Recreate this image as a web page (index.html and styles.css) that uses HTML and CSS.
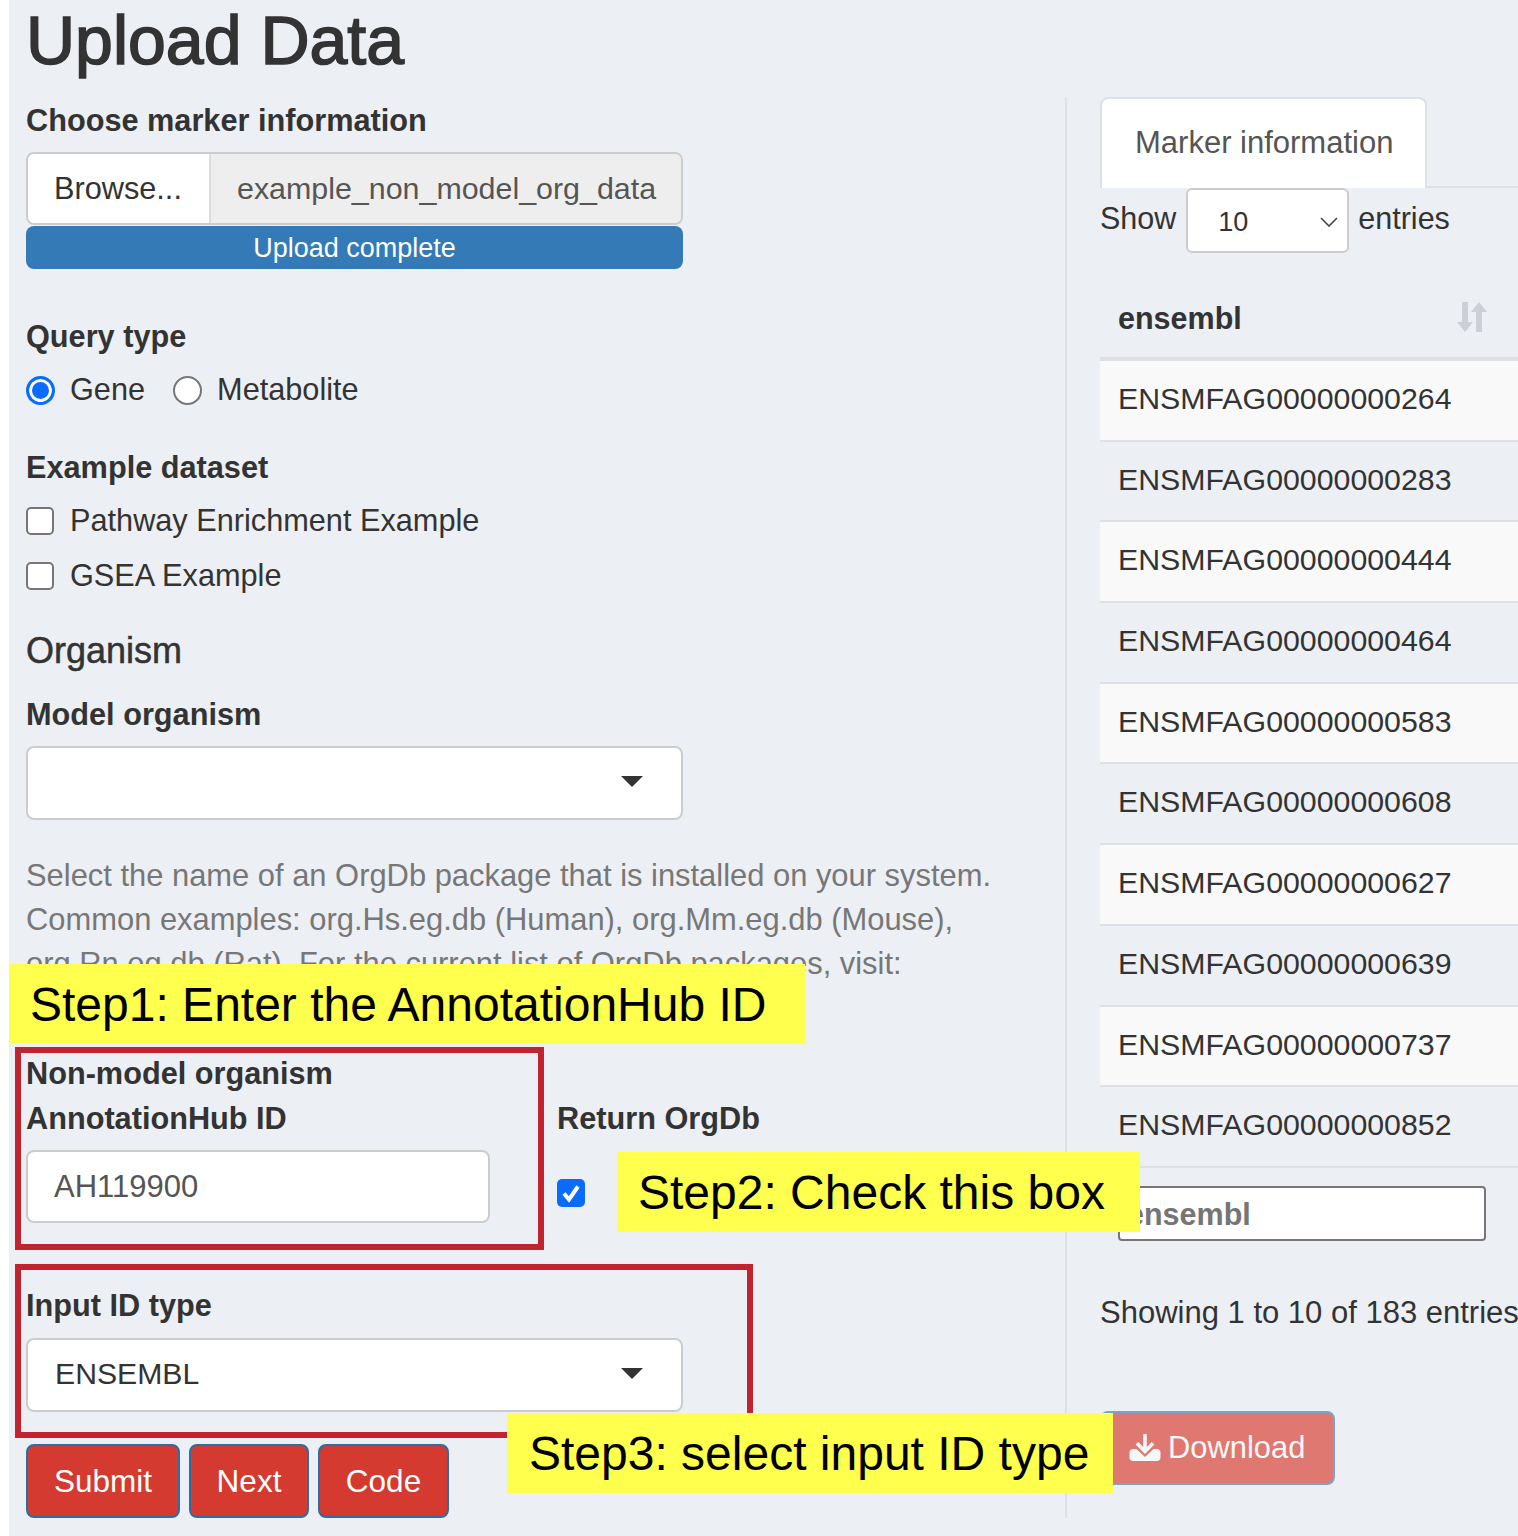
FILE: index.html
```html
<!DOCTYPE html>
<html lang="en">
<head>
    <meta charset="UTF-8">
    <title>Upload Data</title>
    <link rel="stylesheet" href="styles.css">
</head>
<body>

<div class="page">
    <h1>Upload Data</h1>

    <div class="columns">
        <div class="left">
            <div class="label">Choose marker information</div>
            <div class="file-input">
                <div class="browse">Browse...</div>
                <div class="file-name">example_non_model_org_data</div>
            </div>
            <div class="progress">Upload complete</div>

            <div class="label query-label">Query type</div>
            <div class="radios">
                <span class="radio checked"></span><span class="radio-text">Gene</span>
                <span class="radio"></span><span class="radio-text">Metabolite</span>
            </div>

            <div class="label example-label">Example dataset</div>
            <div class="check-row first"><span class="check"></span>Pathway Enrichment Example</div>
            <div class="check-row"><span class="check"></span>GSEA Example</div>

            <h4>Organism</h4>
            <div class="label model-label">Model organism</div>
            <div class="select select-model">
                <span class="caret"></span>
            </div>

            <p class="help">Select the name of an OrgDb package that is installed on your system. Common examples: org.Hs.eg.db (Human), org.Mm.eg.db (Mouse), org.Rn.eg.db (Rat). For the current list of OrgDb packages, visit:</p>

            <div class="non-model">
                <div class="hub">
                    <div class="label">Non-model organism</div>
                    <div class="label hub-label">AnnotationHub ID</div>
                    <input class="text-input" type="text" value="AH119900">
                </div>
                <div class="orgdb">
                    <div class="label">Return OrgDb</div>
                    <span class="check blue">
                        <svg viewBox="0 0 28 28" width="28" height="28"><path d="M7 14.5l5 6 9-13" fill="none" stroke="#fff" stroke-width="4"/></svg>
                    </span>
                </div>
            </div>

            <div class="label id-label">Input ID type</div>
            <div class="select select-id">
                ENSEMBL
                <span class="caret"></span>
            </div>

            <div class="buttons">
                <button class="btn submit">Submit</button>
                <button class="btn next">Next</button>
                <button class="btn code">Code</button>
            </div>
        </div>

        <div class="right">
            <div class="tabs">
                <div class="tab">Marker information</div>
            </div>
            <div class="length">
                Show
                <div class="length-select">
                    10
                    <svg viewBox="0 0 18 10" width="18" height="10"><path d="M1 1l8 8 8-8" fill="none" stroke="#444" stroke-width="1.6"/></svg>
                </div>
                entries
            </div>

            <div class="th">
                ensembl
                <svg viewBox="0 0 32 32" width="32" height="32"><path d="M6 1h6v20h5l-8 10-8-10h5zM23 1l8 10h-5v20h-6V11h-5z" fill="#ccd0d6"/></svg>
            </div>
            <div class="td odd">ENSMFAG00000000264</div>
            <div class="td">ENSMFAG00000000283</div>
            <div class="td odd">ENSMFAG00000000444</div>
            <div class="td">ENSMFAG00000000464</div>
            <div class="td odd">ENSMFAG00000000583</div>
            <div class="td">ENSMFAG00000000608</div>
            <div class="td odd">ENSMFAG00000000627</div>
            <div class="td">ENSMFAG00000000639</div>
            <div class="td odd">ENSMFAG00000000737</div>
            <div class="td">ENSMFAG00000000852</div>

            <div class="filter">ensembl</div>
            <div class="info">Showing 1 to 10 of 183 entries</div>

            <button class="download">
                <svg viewBox="0 0 32 28" width="32" height="28"><path d="M14.2 0h3.6v13l5-5 2.6 2.6L16 20l-9.4-9.4L9.2 8l5 5z" fill="#f6f7f9"/><path d="M4 15h3.500l8.500 8 8.500-8H28c2 0 3.500 1.500 3.500 3.500v5c0 2-1.500 3.500-3.500 3.500H4c-2 0-3.500-1.500-3.500-3.500v-5C.5 16.500 2 15 4 15z" fill="#f6f7f9"/></svg>
                Download
            </button>
        </div>
    </div>

    <!-- annotations drawn on top of the screenshot -->
    <div class="red-box box-hub"></div>
    <div class="red-box box-id"></div>
    <div class="step step1">Step1: Enter the AnnotationHub ID</div>
    <div class="step step2">Step2: Check this box</div>
    <div class="step step3">Step3: select input ID type</div>
</div>

</body>
</html>
```

FILE: styles.css
```css
* {
    box-sizing: border-box;
}
html, body {
    margin: 0;
    height: 1536px;
    overflow: hidden;
    background-color: #fff;
}
body {
    font-family: "Liberation Sans", Arial, sans-serif;
    font-size: 30.7px;
    color: #333;
}
.page {
    position: relative;
    margin-left: 9px;
    height: 1536px;
    width: 1509px;
    background-color: #eceff4;
    overflow: hidden;
}
h1 {
    margin: 0 0 17px 17px;
    height: 80px;
    font-size: 68px;
    line-height: 80px;
    font-weight: normal;
    -webkit-text-stroke: 1.6px #333;
}
.columns {
    display: flex;
    height: 1421px;
}
.left {
    width: 1056px;
    padding-left: 17px;
    flex-shrink: 0;
}
.right {
    width: 453px;
    border-left: 2px solid #dde0e4;
    padding-left: 33px;
}

/* form bits */
.label {
    font-weight: bold;
    line-height: 48px;
    height: 46px;
    white-space: nowrap;
}
.hub-label {
    margin-top: -1px;
}
.file-input {
    display: flex;
    width: 657px;
    height: 73px;
    margin-top: 9px;
    border: 2px solid #ccc;
    border-radius: 8px;
    overflow: hidden;
    line-height: 69px;
}
.browse {
    width: 183px;
    padding-left: 26px;
    background-color: #fff;
    border-right: 2px solid #ddd;
}
.file-name {
    flex: 1;
    padding-left: 26px;
    background-color: #eee;
    color: #555;
    font-size: 30.4px;
    white-space: nowrap;
}
.progress {
    width: 657px;
    height: 43px;
    margin-top: 1px;
    background-color: #337ab7;
    border-radius: 8px;
    color: #fff;
    font-size: 27px;
    line-height: 45px;
    text-align: center;
}
.query-label {
    margin-top: 44px;
}
.radios {
    display: flex;
    align-items: center;
    height: 46px;
    margin-top: 8px;
}
.radio {
    width: 29px;
    height: 29px;
    border-radius: 50%;
    border: 2px solid #767676;
    background-color: #fff;
}
.radio.checked {
    border: 3px solid #0a6cff;
    background-color: #0a6cff;
    box-shadow: inset 0 0 0 3px #fff;
}
.radio-text {
    margin-left: 15px;
    margin-right: 28px;
}
.example-label {
    margin-top: 31px;
}
.check-row {
    display: flex;
    align-items: center;
    height: 46px;
    margin-top: 9px;
}
.check-row.first {
    margin-top: 8px;
}
.check {
    display: inline-block;
    width: 28px;
    height: 28px;
    margin-right: 16px;
    border: 2px solid #767676;
    border-radius: 5px;
    background-color: #fff;
}
.check.blue {
    border: none;
    background-color: #0a6cff;
    margin: 38px 0 0 0;
}
.check.blue svg {
    display: block;
}
h4 {
    margin: 27px 0 0 0;
    font-size: 36px;
    font-weight: normal;
    line-height: 50px;
    -webkit-text-stroke: 0.5px #333;
}
.model-label {
    margin-top: 15px;
}
.select {
    position: relative;
    width: 657px;
    height: 74px;
    padding-left: 27px;
    border: 2px solid #ccc;
    border-radius: 8px;
    background-color: #fff;
    font-size: 30.2px;
    line-height: 68px;
}
.select-model {
    margin-top: 9px;
}
.caret {
    position: absolute;
    right: 38px;
    top: 28px;
    border-top: 11px solid #333;
    border-left: 11px solid transparent;
    border-right: 11px solid transparent;
}
.help {
    width: 990px;
    margin: 34px 0 0 0;
    font-size: 30.9px;
    line-height: 44px;
    color: #777;
}
.non-model {
    display: flex;
    margin-top: 64px;
}
.hub {
    width: 464px;
}
.text-input {
    display: block;
    width: 464px;
    height: 73px;
    margin-top: 9px;
    padding: 0 0 0 26px;
    border: 2px solid #ccc;
    border-radius: 8px;
    background-color: #fff;
    font-family: inherit;
    font-size: 31px;
    color: #555;
}
.orgdb {
    margin-left: 67px;
    padding-top: 45px;
}
.id-label {
    margin-top: 59px;
}
.select-id {
    margin-top: 10px;
}
.buttons {
    display: flex;
    gap: 9px;
    margin-top: 32px;
}
.btn {
    height: 74px;
    border: 2px solid #2e6da4;
    border-radius: 8px;
    background-color: #d43a2f;
    color: #fff;
    font-family: inherit;
    font-size: 31.5px;
    padding: 0;
}
.submit {
    width: 154px;
}
.next {
    width: 120px;
}
.code {
    width: 131px;
}

/* right side */
.tabs {
    height: 91px;
    border-bottom: 2px solid #dde0e4;
}
.tab {
    width: 327px;
    height: 91px;
    padding-left: 33px;
    border: 2px solid #dde0e4;
    border-bottom: none;
    border-radius: 8px 8px 0 0;
    background-color: #fff;
    color: #555;
    font-size: 31px;
    line-height: 88px;
    white-space: nowrap;
}
.length {
    display: flex;
    align-items: flex-start;
    height: 65px;
    font-size: 30.5px;
    line-height: 60px;
}
.length-select {
    display: flex;
    align-items: center;
    justify-content: space-between;
    width: 163px;
    height: 65px;
    margin: 0 9px 0 10px;
    padding: 3px 9px 0 30px;
    border: 2px solid #ccc;
    border-radius: 6px;
    background-color: #fff;
    font-size: 27px;
}
.th {
    display: flex;
    align-items: center;
    justify-content: space-between;
    height: 108px;
    padding: 26px 30px 0 18px;
    border-bottom: 4px solid #dcdfe3;
    font-size: 30.5px;
    font-weight: bold;
}
.th svg {
    margin-top: -3px;
}
.td {
    height: 80.7px;
    padding-left: 18px;
    font-size: 30.3px;
    line-height: 76px;
    border-bottom: 2px solid #dde0e4;
    white-space: nowrap;
}
.td.odd {
    background-color: #f9f9f9;
}
.filter {
    width: 368px;
    height: 55px;
    margin: 18px 0 0 18px;
    padding-left: 7px;
    border: 2px solid #767676;
    border-radius: 4px;
    background-color: #fff;
    color: #757575;
    font-size: 30.5px;
    font-weight: bold;
    line-height: 52px;
}
.info {
    margin-top: 49px;
    font-size: 31px;
    line-height: 46px;
    white-space: nowrap;
}
.download {
    display: flex;
    align-items: center;
    gap: 7px;
    width: 235px;
    height: 74px;
    margin-top: 75px;
    padding: 0 0 0 27px;
    border: 2px solid #7ba3c9;
    border-radius: 8px;
    background-color: #df7871;
    color: #f6f7f9;
    font-family: inherit;
    font-size: 30.9px;
}

/* annotations */
.red-box {
    position: absolute;
    border: 6px solid #c02430;
}
.box-hub {
    left: 6px;
    top: 1047px;
    width: 529px;
    height: 203px;
}
.box-id {
    left: 6px;
    top: 1264px;
    width: 738px;
    height: 174px;
}
.step {
    position: absolute;
    height: 80px;
    background-color: #ffff4d;
    color: #000;
    font-size: 48px;
    line-height: 82px;
    white-space: nowrap;
}
.step1 {
    left: 0;
    top: 964px;
    width: 796px;
    padding-left: 21px;
}
.step2 {
    left: 608px;
    top: 1152px;
    width: 523px;
    padding-left: 21px;
}
.step3 {
    left: 498px;
    top: 1413px;
    width: 606px;
    padding-left: 22px;
}
```
